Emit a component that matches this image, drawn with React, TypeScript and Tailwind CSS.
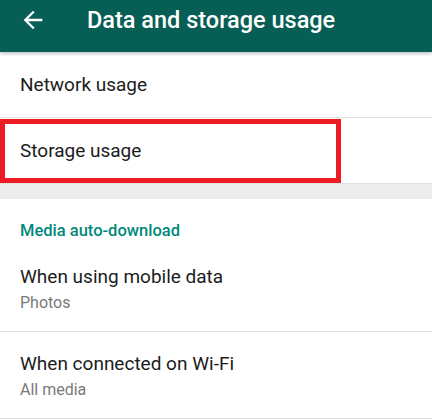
import { ReactNode } from "react";

function BackArrow() {
  return (
    <svg viewBox="0 0 24 24" className="h-[28px] w-[28px]" fill="#ffffff">
      <path d="M20 11H7.83l5.59-5.59L12 4l-8 8 8 8 1.41-1.41L7.83 13H20v-2z" />
    </svg>
  );
}

function SimpleRow({ children }: { children: ReactNode }) {
  return (
    <div className="flex h-[66px] items-center border-b border-[#e0e0e0] px-5 pt-px text-[19px] text-[#1c1c1c]">
      {children}
    </div>
  );
}

function SettingItem({ title, subtitle }: { title: string; subtitle: string }) {
  return (
    <div className="h-[87px] border-b border-[#e0e0e0] px-5 pt-[20px]">
      <p className="text-[19px] leading-[24px] text-[#1c1c1c]">{title}</p>
      <p className="mt-[4px] text-[16px] leading-[20px] text-[#7a7a7a]">{subtitle}</p>
    </div>
  );
}

export default function App() {
  return (
    <div className="h-[420px] w-[432px] overflow-hidden bg-white font-['Roboto',sans-serif]">
      <header className="relative z-10 flex h-[52px] items-center bg-[#075e54] pb-[12px] shadow-[0_2px_3px_rgba(0,0,0,0.22)]">
        <div className="ml-[19px] flex">
          <BackArrow />
        </div>
        <h1 className="ml-[40px] mt-px text-[23.5px] font-medium text-white">Data and storage usage</h1>
      </header>

      <SimpleRow>Network usage</SimpleRow>

      <div className="h-[66px] border-b border-[#e0e0e0] pt-px">
        <div className="flex h-[64px] w-[341px] items-center border-[5px] border-[#ed1c24] pl-[15px] text-[19px] text-[#1c1c1c]">
          Storage usage
        </div>
      </div>

      <div className="h-[15px] bg-[#ececec]" />

      <div className="h-[46px] px-5 pt-[22px]">
        <p className="text-[16.5px] font-medium leading-[20px] text-[#00897b]">Media auto-download</p>
      </div>

      <SettingItem title="When using mobile data" subtitle="Photos" />
      <SettingItem title="When connected on Wi-Fi" subtitle="All media" />
    </div>
  );
}
